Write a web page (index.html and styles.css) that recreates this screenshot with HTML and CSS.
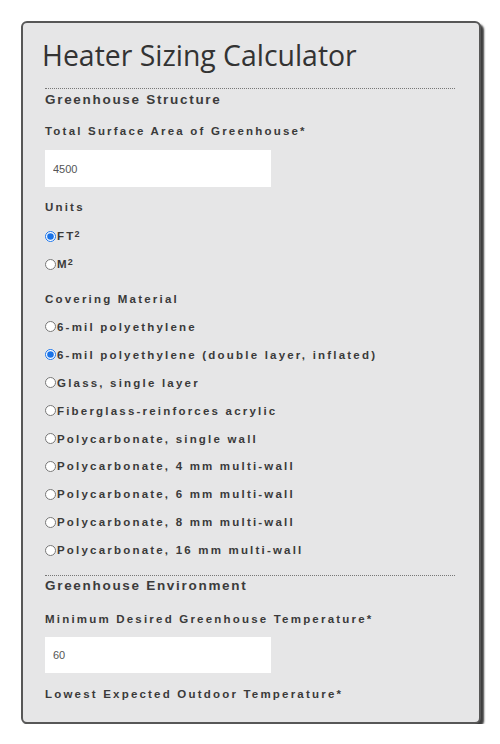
FILE: index.html
```html
<!DOCTYPE html>
<html>
<head>
<meta charset="utf-8">
<link rel="stylesheet" href="styles.css">
</head>
<body>
<div class="card">
  <h1 class="title">Heater Sizing Calculator</h1>
  <div class="rule"></div>
  <div class="section">Greenhouse Structure</div>
  <div class="label mt13">Total Surface Area of Greenhouse*</div>
  <input class="field" type="text" value="4500">
  <div class="label mt11">Units</div>
  <div class="radios first">
    <label class="opt"><input type="radio" name="u" checked>FT<sup>2</sup></label>
    <label class="opt"><input type="radio" name="u">M<sup>2</sup></label>
  </div>
  <div class="label mt12">Covering Material</div>
  <div class="radios list">
    <label class="opt"><input type="radio" name="c">6-mil polyethylene</label>
    <label class="opt"><input type="radio" name="c" checked>6-mil polyethylene (double layer, inflated)</label>
    <label class="opt"><input type="radio" name="c">Glass, single layer</label>
    <label class="opt"><input type="radio" name="c">Fiberglass-reinforces acrylic</label>
    <label class="opt"><input type="radio" name="c">Polycarbonate, single wall</label>
    <label class="opt"><input type="radio" name="c">Polycarbonate, 4 mm multi-wall</label>
    <label class="opt"><input type="radio" name="c">Polycarbonate, 6 mm multi-wall</label>
    <label class="opt"><input type="radio" name="c">Polycarbonate, 8 mm multi-wall</label>
    <label class="opt"><input type="radio" name="c">Polycarbonate, 16 mm multi-wall</label>
  </div>
  <div class="rule rule2"></div>
  <div class="section sec2">Greenhouse Environment</div>
  <div class="label mt15">Minimum Desired Greenhouse Temperature*</div>
  <input class="field field2" type="text" value="60">
  <div class="label mt12">Lowest Expected Outdoor Temperature*</div>
</div>
</body>
</html>
```
FILE: styles.css
```css
html, body {
  margin: 0;
  padding: 0;
  background: #ffffff;
}
body {
  padding: 21px 0 0 21px;
  font-family: "Liberation Sans", Arial, sans-serif;
  color: #3a3a3a;
}
.card {
  box-sizing: border-box;
  width: 460px;
  height: 703px;
  background: #e6e6e7;
  border: 2px solid #575757;
  border-radius: 6px;
  box-shadow: 3px 3px 2px #3e3e3e;
  padding: 14px 24px 0 22px;
  display: flex;
  flex-direction: column;
}
.title {
  margin: 0;
  font-family: "Open Sans", sans-serif;
  font-weight: 400;
  font-size: 28.4px;
  line-height: 36px;
  color: #333;
  margin-left: -3px;
}
.rule {
  margin-top: 15px;
  border-top: 1px dotted #777;
  height: 0;
}
.rule2 { margin-top: 11px; }
.section {
  margin-top: 2px;
  font-weight: bold;
  font-size: 13.5px;
  letter-spacing: 1.7px;
  line-height: 18px;
  color: #3c3c3c;
}
.sec2 { margin-top: 1px; }
.label {
  font-weight: bold;
  font-size: 11.5px;
  letter-spacing: 2.2px;
  line-height: 18px;
  color: #3a3a3a;
}
.mt11 { margin-top: 11px; }
.mt12 { margin-top: 12px; }
.mt13 { margin-top: 13px; }
.mt15 { margin-top: 15px; }
.field {
  box-sizing: border-box;
  width: 226px;
  height: 37px;
  margin-top: 10px;
  border: none;
  background: #fff;
  padding: 0 8px;
  font-family: "Liberation Sans", Arial, sans-serif;
  font-size: 11px;
  color: #555;
  outline: none;
}
.field2 { height: 36px; margin-top: 9px; }
.radios {
  display: flex;
  flex-direction: column;
}
.radios.first { margin-top: 6px; }
.radios.list { margin-top: 5px; }
.opt {
  display: flex;
  align-items: center;
  height: 28px;
  font-weight: bold;
  font-size: 11.5px;
  letter-spacing: 2.2px;
  color: #3a3a3a;
}
.radios.list .opt { height: 27.9px; }
.opt input {
  width: 11px;
  height: 11px;
  margin: 0 1px 0 0;
  accent-color: #1a73e8;
}
.opt sup {
  font-size: 9px;
  letter-spacing: 0;
  margin-left: -1px;
  position: relative;
  top: -2px;
}
```
